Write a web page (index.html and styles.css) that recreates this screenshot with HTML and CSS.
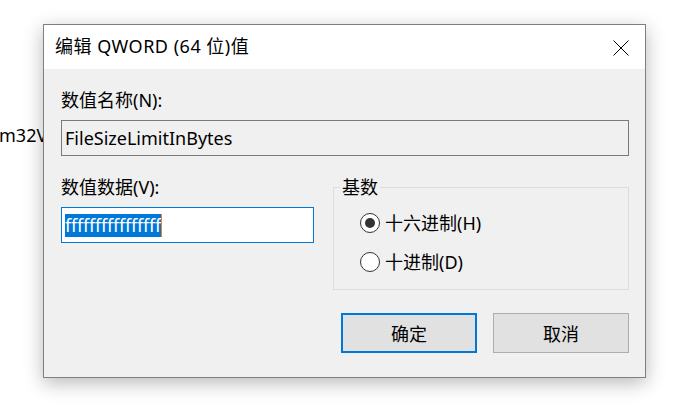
FILE: index.html
```html
<!DOCTYPE html>
<html lang="zh-CN">
<head>
<meta charset="utf-8">
<title>编辑 QWORD (64 位)值</title>
<link rel="stylesheet" href="styles.css">
</head>
<body>
<div class="desktop">
  <div class="behind">m32V</div>
  <div class="dialog">
    <div class="titlebar">
      <span class="title">编辑 QWORD (64 位)值</span>
      <svg class="close" width="16" height="16" viewBox="0 0 16 16"><path d="M0.5 0.5L15.5 15.5M15.5 0.5L0.5 15.5" stroke="#000" stroke-width="1" fill="none"/></svg>
    </div>
    <div class="body">
      <div class="label">数值名称(N):</div>
      <div class="field readonly">FileSizeLimitInBytes</div>
      <div class="cols">
        <div class="left">
          <div class="label">数值数据(V):</div>
          <div class="field focused"><span class="sel">ffffffffffffffff</span><span class="caret"></span></div>
        </div>
        <fieldset class="group">
          <legend>基数</legend>
          <div class="radio"><span class="dot checked"></span><span>十六进制(H)</span></div>
          <div class="radio"><span class="dot"></span><span>十进制(D)</span></div>
        </fieldset>
      </div>
      <div class="buttons">
        <div class="btn default">确定</div>
        <div class="btn">取消</div>
      </div>
    </div>
  </div>
</div>
</body>
</html>
```
FILE: styles.css
```css
html, body {
  margin: 0;
  padding: 0;
  background: #fff;
}
body {
  font-family: "Noto Sans", "Noto Sans CJK SC", sans-serif;
  font-size: 18px;
  color: #000;
  width: 699px;
  height: 405px;
  overflow: hidden;
}
.desktop {
  position: relative;
  width: 699px;
  height: 405px;
}
.behind {
  position: absolute;
  left: -1px;
  top: 123px;
  line-height: 24px;
}
.dialog {
  position: absolute;
  left: 43px;
  top: 24px;
  width: 601px;
  height: 352px;
  border: 1px solid #7f7f7f;
  background: #f0f0f0;
  box-shadow: 0 5px 18px rgba(0, 0, 0, 0.28);
  display: flex;
  flex-direction: column;
}
.titlebar {
  height: 44px;
  background: #fff;
  display: flex;
  align-items: center;
  justify-content: space-between;
  padding: 0 16px 0 11px;
}
.title {
  line-height: 24px;
  margin-top: -2px;
  letter-spacing: 0.5px;
}
.close {
  display: block;
  margin-top: 2px;
}
.body {
  padding: 19px 16px 0 17px;
  display: flex;
  flex-direction: column;
}
.label {
  line-height: 24px;
  height: 24px;
}
.field {
  margin-top: 8px;
  height: 34px;
  border: 1px solid #7a7a7a;
  box-sizing: content-box;
  display: flex;
  align-items: center;
  padding-left: 3px;
  line-height: 24px;
}
.readonly {
  background: #f0f0f0;
}
.focused {
  background: #fff;
  border-color: #0078d7;
}
.sel {
  background: #0078d7;
  color: #fff;
  height: 23px;
  line-height: 23px;
  letter-spacing: -0.2px;
}
.caret {
  width: 1px;
  height: 23px;
  background: #f7820f;
}
.cols {
  margin-top: 19px;
  display: flex;
  gap: 19px;
}
.left {
  width: 253px;
  display: flex;
  flex-direction: column;
}
.group {
  margin: 0;
  width: 296px;
  box-sizing: border-box;
  height: 115px;
  border: 1px solid #dcdcdc;
  padding: 12px 0 0 26px;
  min-width: 0;
}
.group legend {
  padding: 0 2px;
  margin-left: -20px;
  line-height: 24px;
}
.radio {
  display: flex;
  align-items: center;
  gap: 5px;
  height: 24px;
  line-height: 24px;
  margin-bottom: 15px;
}
.dot {
  width: 18px;
  height: 18px;
  border: 1px solid #333;
  border-radius: 50%;
  background: #fff;
  display: flex;
  align-items: center;
  justify-content: center;
}
.dot.checked::after {
  content: "";
  width: 10px;
  height: 10px;
  border-radius: 50%;
  background: #333;
}
.buttons {
  margin-top: 23px;
  display: flex;
  justify-content: flex-end;
  gap: 16px;
}
.btn {
  width: 134px;
  height: 38px;
  border: 1px solid #adadad;
  background: #e1e1e1;
  display: flex;
  align-items: center;
  justify-content: center;
}
.btn.default {
  width: 132px;
  height: 36px;
  border: 2px solid #0078d7;
}
```
